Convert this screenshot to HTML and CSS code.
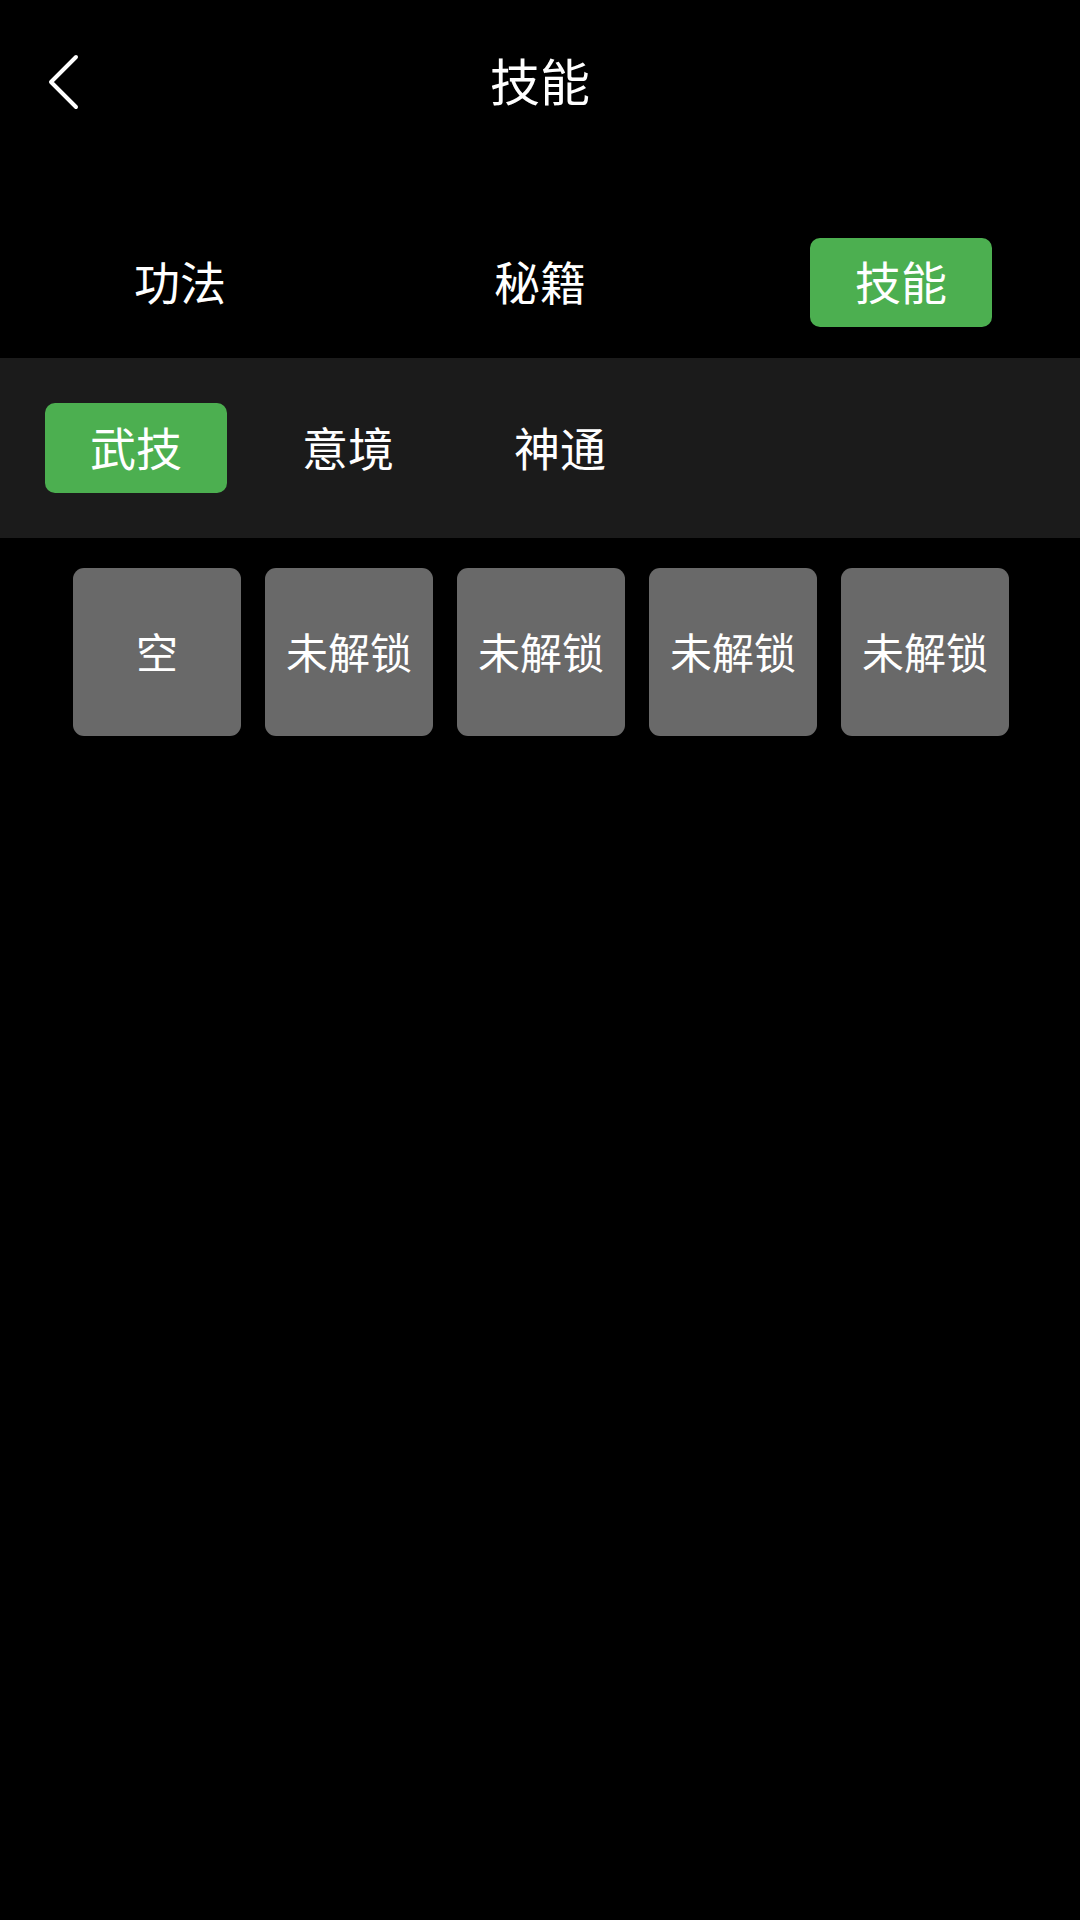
FILE: index.html
```html
<!DOCTYPE html>
<html lang="zh-CN">
<head>
<meta charset="utf-8">
<title>技能</title>
<link rel="stylesheet" href="styles.css">
</head>
<body>
<div class="page">
  <header class="header">
    <div class="back">
      <svg width="40" height="60" viewBox="0 0 40 60">
        <polyline points="29,5 4,30 29,55" fill="none" stroke="#fff" stroke-width="4" stroke-linecap="round" stroke-linejoin="round"/>
      </svg>
    </div>
    <div class="title">技能</div>
    <div></div>
  </header>
  <nav class="tabs">
    <div class="tab"><span class="tab-label">功法</span></div>
    <div class="tab"><span class="tab-label">秘籍</span></div>
    <div class="tab"><span class="tab-label active">技能</span></div>
  </nav>
  <section class="subtabs">
    <span class="subtab active">武技</span>
    <span class="subtab">意境</span>
    <span class="subtab">神通</span>
  </section>
  <section class="slots">
    <div class="slot">空</div>
    <div class="slot">未解锁</div>
    <div class="slot">未解锁</div>
    <div class="slot">未解锁</div>
    <div class="slot">未解锁</div>
  </section>
</div>
</body>
</html>
```
FILE: styles.css
```css
html, body {
  margin: 0;
  padding: 0;
  background: #000;
}
body {
  width: 1080px;
  height: 1920px;
  color: #fff;
  font-family: "Noto Sans CJK SC", "Noto Sans", sans-serif;
}
.page {
  display: flex;
  flex-direction: column;
}
.header {
  height: 162px;
  display: grid;
  grid-template-columns: 1fr auto 1fr;
  align-items: center;
}
.back {
  padding-left: 47px;
  display: flex;
  align-items: center;
  padding-top: 2px;
}
.back svg { display: block; }
.title {
  font-size: 50px;
  line-height: 1;
  padding-bottom: 4px;
}
.tabs {
  margin-top: 76px;
  height: 89px;
  display: grid;
  grid-template-columns: repeat(3, 1fr);
  margin-bottom: 31px;
}
.tab {
  display: flex;
  justify-content: center;
  align-items: center;
}
.tab-label {
  box-sizing: border-box;
  font-size: 46px;
  line-height: 85px;
  height: 89px;
  padding-bottom: 4px;
  width: 182px;
  text-align: center;
  border-radius: 10px;
}
.tab-label.active {
  background: #4caf50;
  margin-left: 2px;
}
.subtabs {
  height: 180px;
  background: #1b1b1b;
  display: flex;
  align-items: center;
  padding-left: 45px;
  gap: 30px;
}
.subtab {
  box-sizing: border-box;
  width: 182px;
  height: 90px;
  line-height: 86px;
  padding-bottom: 4px;
  text-align: center;
  font-size: 46px;
  border-radius: 10px;
}
.subtab.active {
  background: #4caf50;
}
.slots {
  padding-top: 30px;
  display: flex;
  justify-content: center;
  gap: 24px;
  padding-left: 2px;
}
.slot {
  box-sizing: border-box;
  width: 168px;
  height: 168px;
  padding-bottom: 4px;
  background: #696969;
  border-radius: 11px;
  display: flex;
  align-items: center;
  justify-content: center;
  font-size: 42px;
}
```
